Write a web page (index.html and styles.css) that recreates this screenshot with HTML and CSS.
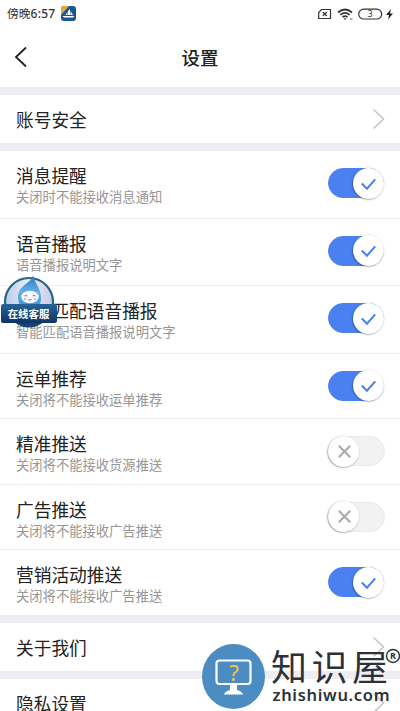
FILE: index.html
```html
<!DOCTYPE html>
<html lang="zh-CN">
<head>
<meta charset="utf-8">
<title>设置</title>
<link rel="stylesheet" href="styles.css">
</head>
<body>
<div class="screen">
  <div class="status">
    <span class="time">傍晚<span class="digits">6:57</span></span>
    <svg class="app" width="15" height="15" viewBox="0 0 15 15"><rect width="15" height="15" rx="3" fill="#17569b"/><path d="M0 9V3Q0 0 3 0H8Z" fill="#e6a63b"/><path d="M7 9V5L9 3V9ZM9.500 9V5L12 9ZM4.500 9L6.500 6V9ZM1.500 10H13.500L12 11.500H3Z" fill="#fff"/></svg>
    <span class="spacer"></span>
    <svg width="80" height="16" viewBox="0 0 80 16" fill="none" stroke="#333" stroke-width="1.2">
      <path d="M4.500 3.500H13.500V12.500H1.700V6.500ZM5.800 6L9.900 10M9.900 6L5.800 10"/>
      <path d="M21 6.500Q28 .5 35 6.500M23.300 8.800Q28 5 32.700 8.800M25.500 11Q28 9.300 30.500 11" stroke-width="1.700"/>
      <path d="M26.500 12.300L28 14L29.500 12.300Z" fill="#333" stroke="none"/><path d="M33 13H35.500" stroke="#777"/>
      <rect x="41.700" y="3.200" width="23" height="9.800" rx="4.900"/>
      <text x="53.200" y="11.400" class="battery">3</text>
      <path d="M74 3L69 9H72L71 13.500L76 7.500H73Z" fill="#222" stroke="none"/>
    </svg>
  </div>
  <header class="nav">
    <svg class="back" width="14" height="22" viewBox="0 0 14 22"><path d="M12 1.500L2 11L12 20.500" fill="none" stroke="#222" stroke-width="1.800"/></svg>
    <h1>设置</h1>
  </header>
  <div class="link"><span>账号安全</span><svg class="chevron" width="13" height="22" viewBox="0 0 13 22"><path d="M1.500 1.500L11.500 11L1.500 20.500"/></svg></div>
  <div class="group">
    <div class="row tall"><div><h2>消息提醒</h2><p>关闭时不能接收消息通知</p></div><div class="toggle on"><svg class="knob" viewBox="0 0 30 30"><path d="M8.500 15L13.500 20L21.500 11"/></svg></div></div>
    <div class="row tall"><div><h2>语音播报</h2><p>语音播报说明文字</p></div><div class="toggle on"><svg class="knob" viewBox="0 0 30 30"><path d="M8.500 15L13.500 20L21.500 11"/></svg></div></div>
    <div class="row tall"><div><h2>智能匹配语音播报</h2><p>智能匹配语音播报说明文字</p></div><div class="toggle on"><svg class="knob" viewBox="0 0 30 30"><path d="M8.500 15L13.500 20L21.500 11"/></svg></div></div>
    <div class="row"><div><h2>运单推荐</h2><p>关闭将不能接收运单推荐</p></div><div class="toggle on"><svg class="knob" viewBox="0 0 30 30"><path d="M8.500 15L13.500 20L21.500 11"/></svg></div></div>
    <div class="row"><div><h2>精准推送</h2><p>关闭将不能接收货源推送</p></div><div class="toggle"><svg class="knob" viewBox="0 0 30 30"><path d="M10.500 9.500L21.500 20.500M21.500 9.500L10.500 20.500"/></svg></div></div>
    <div class="row"><div><h2>广告推送</h2><p>关闭将不能接收广告推送</p></div><div class="toggle"><svg class="knob" viewBox="0 0 30 30"><path d="M10.500 9.500L21.500 20.500M21.500 9.500L10.500 20.500"/></svg></div></div>
    <div class="row"><div><h2>营销活动推送</h2><p>关闭将不能接收广告推送</p></div><div class="toggle on"><svg class="knob" viewBox="0 0 30 30"><path d="M8.500 15L13.500 20L21.500 11"/></svg></div></div>
  </div>
  <div class="link"><span>关于我们</span><svg class="chevron" width="13" height="22" viewBox="0 0 13 22"><path d="M1.500 1.500L11.500 11L1.500 20.500"/></svg></div>
  <div class="link"><span>隐私设置</span><svg class="chevron" width="13" height="22" viewBox="0 0 13 22"><path d="M1.500 1.500L11.500 11L1.500 20.500"/></svg></div>

  <div class="service">
    <svg width="58" height="54" viewBox="0 0 58 54">
      <defs>
        <linearGradient id="drop" x1="0" y1="0" x2="0" y2="1"><stop offset="0" stop-color="#2c73bd"/><stop offset=".5" stop-color="#62b2ec"/><stop offset="1" stop-color="#3590db"/></linearGradient>
        <linearGradient id="disc"><stop offset="0" stop-color="#b3cceb"/><stop offset=".5" stop-color="#f3edf3"/><stop offset="1" stop-color="#c4cbe5"/></linearGradient>
        <linearGradient id="ribbon" x1="0" y1="0" x2="0" y2="1"><stop offset="0" stop-color="#286398"/><stop offset="1" stop-color="#0e3568"/></linearGradient>
      </defs>
      <circle cx="29" cy="27" r="24" fill="url(#disc)" stroke="#246782" stroke-width="2.200"/>
      <path d="M33 0C32 8 18 10 18 22C18 31 23 34 30 34C37 34 42 30 41 21C40 12 35 9 33 0Z" fill="url(#drop)"/>
      <ellipse cx="30" cy="22" rx="8.800" ry="6.200" fill="#f4faff"/>
      <path d="M24.500 21Q26 20 27.300 21M32.700 21Q34 20 35.500 21M28.500 24.500Q30 25.800 31.500 24.500" fill="none" stroke="#567eac"/>
      <circle cx="25" cy="24" r="1.300" fill="#f5b4b7"/><circle cx="35" cy="24" r="1.300" fill="#f5b4b7"/>
      <path d="M15 47H43L37 51Q29 54 21 51Z" fill="#164372"/>
      <rect x="1" y="29" width="56" height="19" rx="2" fill="url(#ribbon)"/>
      <text x="28.500" y="42.500" class="service-label">在线客服</text>
    </svg>
  </div>

  <div class="watermark">
    <svg width="200" height="68" viewBox="0 0 200 68">
      <ellipse cx="33.500" cy="33.500" rx="31.500" ry="32.500" fill="#4b8cc3"/>
      <rect x="16.500" y="17.500" width="34" height="23.500" rx="3" fill="none" stroke="#fff" stroke-width="2.200"/>
      <path d="M30 41H37V47Q42 48 43 51.500H24Q25 48 30 47Z" fill="#fff"/>
      <text x="34" y="38" class="question">?</text>
      <text x="71" y="38" class="brand" textLength="117" lengthAdjust="spacing">知识屋</text>
      <text x="72.500" y="58" class="domain" textLength="117" lengthAdjust="spacing">zhishiwu.com</text>
      <circle cx="193" cy="13" r="6.500" fill="none" stroke="#2d3138" stroke-width="1.400"/>
      <text x="193" y="16.300" class="registered">R</text>
    </svg>
  </div>
</div>
</body>
</html>
```

FILE: styles.css
```css
* { box-sizing: border-box; }
body { margin: 0; background: #fff; font-family: "Noto Sans CJK SC", sans-serif; color: #222; }
.screen { position: relative; width: 400px; height: 711px; overflow: hidden; }
.status { height: 27px; padding: 0 3px 0 7px; display: flex; align-items: center; }
.time { width: 49px; white-space: nowrap; font: 11.8px/26px "Noto Sans CJK SC", sans-serif; color: #333; }
.digits { font-family: "Noto Sans", sans-serif; font-size: 12px; font-weight: 500; letter-spacing: .25px; }
.app { margin-left: 5px; }
.spacer { flex: 1; }
.battery { font: 9px "Noto Sans", sans-serif; fill: #333; stroke: none; text-anchor: middle; }
.nav { height: 60px; display: grid; grid-template-columns: 40px 1fr 40px; align-items: center; }
.back { margin-left: 14px; }
.nav h1 { margin: 0; font-size: 18.5px; font-weight: 500; text-align: center; line-height: 60px; }
.link { height: 56px; border-top: 8px solid #eeeef2; padding: 0 15px 0 16px; display: flex; align-items: center; justify-content: space-between; font-size: 17.7px; }
.chevron { fill: none; stroke: #c5c5c8; stroke-width: 1.6; }
.group { height: 472px; border-top: 8px solid #eeeef2; }
.row { height: 65.5px; padding: 0 16px; display: flex; justify-content: space-between; border-bottom: 1px solid #eee; }
.row.tall { height: 67.6px; }
.row:last-child { border-bottom: 0; }
.row h2 { margin: 12px 0 0; font-size: 17.7px; line-height: 25px; font-weight: 400; }
.row p { margin: 0; font-size: 13.3px; line-height: 18px; color: #969696; }
.toggle { width: 57px; height: 30px; margin: 17px -1px 0 0; border-radius: 15px; background: #f2f2f2; border: 1px solid #eaeaea; display: flex; align-items: center; }
.toggle.on { width: 56px; margin-right: 0; background: #4a80f0; border-color: #4a80f0; justify-content: flex-end; }
.knob { flex: none; width: 31px; height: 31px; margin: 0 -1px; border-radius: 50%; background: #fff; box-shadow: -.5px .5px 1.5px rgba(0, 0, 0, .5); fill: none; stroke: #aaa; stroke-width: 2; }
.on .knob { stroke: #4a80f0; }
.service { position: absolute; left: 0; top: 275px; }
.service-label { font: 700 10.4px "Noto Sans CJK SC", sans-serif; fill: #fff; text-anchor: middle; }
.watermark { position: absolute; left: 200px; top: 643px; }
.question { font: 22px "Noto Sans", sans-serif; fill: #f4c63d; text-anchor: middle; }
.brand { font: 36px "Noto Sans CJK SC", sans-serif; fill: #2d3138; }
.domain { font: 600 16.5px "Noto Sans", sans-serif; fill: #2d3138; }
.registered { font: 700 9px "Noto Sans", sans-serif; fill: #2d3138; text-anchor: middle; }
```
